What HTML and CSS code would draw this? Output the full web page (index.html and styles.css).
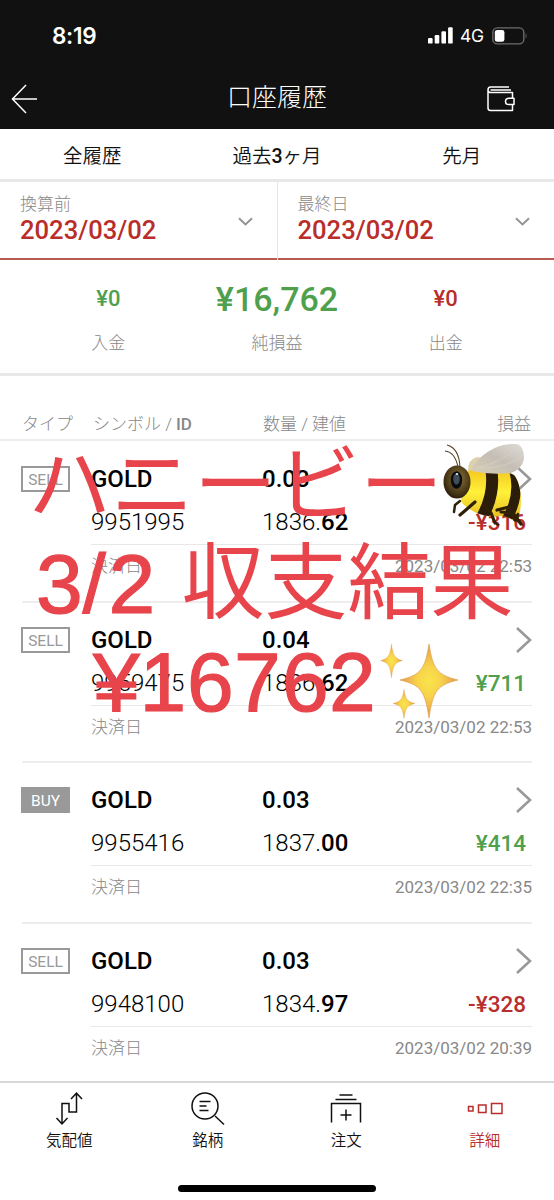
FILE: index.html
```html
<!DOCTYPE html>
<html lang="ja">
<head>
<meta charset="utf-8">
<title>口座履歴</title>
<link rel="stylesheet" href="styles.css">
</head>
<body>
<div class="screen">
  <header class="top">
    <div class="status">
      <span class="clock">8:19</span>
      <span class="signals">
        <svg width="25" height="17" viewBox="0 0 25 17" fill="#fff"><rect x="0" y="11" width="4.6" height="5.6" rx="1.2"/><rect x="6.7" y="8" width="4.6" height="8.6" rx="1.2"/><rect x="13.4" y="4.2" width="4.6" height="12.4" rx="1.2"/><rect x="20.1" y="0.3" width="4.6" height="16.3" rx="1.2"/></svg>
        <span class="net">4G</span>
        <svg width="36" height="18" viewBox="0 0 36 18"><rect x="0.8" y="0.9" width="31" height="16" rx="4.5" fill="none" stroke="#6c6c6c" stroke-width="1.4"/><rect x="2.8" y="3" width="9.6" height="11.8" rx="2.3" fill="#fff"/><path d="M33.6 6.3q2 2.6 0 5.2z" fill="#6c6c6c"/></svg>
      </span>
    </div>
    <div class="titlebar">
      <svg class="back" width="28" height="30" viewBox="0 0 28 30" fill="none" stroke="#fff" stroke-width="1.5"><path d="M15 1 1.5 15 15 29M1.5 15H26"/></svg>
      <h1>口座履歴</h1>
      <svg class="wallet" width="28" height="26" viewBox="0 0 28 26" fill="none" stroke="#fff" stroke-width="1.5" stroke-linejoin="round"><path d="M22 1H3.5Q1 1 1 4V22Q1 24.5 3.5 24.5H25.5V18.500M24 4H3.500M1.200 5Q1.500 6.500 4 6.500H25.500V12.300M22 12.300H27V18.500H22Q18.500 18.500 18.500 15.400T22 12.300Z"/></svg>
    </div>
  </header>

  <nav class="ranges"><span>全履歴</span><span>過去<b>3</b>ヶ月</span><span>先月</span></nav>

  <section class="dates">
    <div class="date"><div><small>換算前</small><strong>2023/03/02</strong></div><svg width="15" height="9" viewBox="0 0 15 9" fill="none" stroke="#929292" stroke-width="1.9"><path d="M1 1.2 7.5 7.4 14 1.2"/></svg></div>
    <div class="date"><div><small>最終日</small><strong>2023/03/02</strong></div><svg width="15" height="9" viewBox="0 0 15 9" fill="none" stroke="#929292" stroke-width="1.9"><path d="M1 1.2 7.5 7.4 14 1.2"/></svg></div>
  </section>

  <section class="summary">
    <div class="green"><strong>¥0</strong><span>入金</span></div>
    <div class="green main"><strong>¥16,762</strong><span>純損益</span></div>
    <div class="red"><strong>¥0</strong><span>出金</span></div>
  </section>

  <div class="columns"><span>タイプ</span><span>シンボル / <b>ID</b></span><span>数量 / 建値</span><span>損益</span></div>

  <main class="trades">
    <article class="trade">
      <div class="badge">SELL</div>
      <div class="info">
        <div class="line"><b>GOLD</b><b>0.03</b><svg class="chev" width="16" height="26" viewBox="0 0 16 26"><path d="M1 1 14 13 1 25"/></svg></div>
        <div class="line"><span>9951995</span><span>1836.<b>62</b></span><strong class="red">-¥316</strong></div>
        <div class="settle"><span>決済日</span><time>2023/03/02 22:53</time></div>
      </div>
    </article>
    <article class="trade">
      <div class="badge">SELL</div>
      <div class="info">
        <div class="line"><b>GOLD</b><b>0.04</b><svg class="chev" width="16" height="26" viewBox="0 0 16 26"><path d="M1 1 14 13 1 25"/></svg></div>
        <div class="line"><span>9959475</span><span>1836.<b>62</b></span><strong class="green">¥711</strong></div>
        <div class="settle"><span>決済日</span><time>2023/03/02 22:53</time></div>
      </div>
    </article>
    <article class="trade">
      <div class="badge buy">BUY</div>
      <div class="info">
        <div class="line"><b>GOLD</b><b>0.03</b><svg class="chev" width="16" height="26" viewBox="0 0 16 26"><path d="M1 1 14 13 1 25"/></svg></div>
        <div class="line"><span>9955416</span><span>1837.<b>00</b></span><strong class="green">¥414</strong></div>
        <div class="settle"><span>決済日</span><time>2023/03/02 22:35</time></div>
      </div>
    </article>
    <article class="trade">
      <div class="badge">SELL</div>
      <div class="info">
        <div class="line"><b>GOLD</b><b>0.03</b><svg class="chev" width="16" height="26" viewBox="0 0 16 26"><path d="M1 1 14 13 1 25"/></svg></div>
        <div class="line"><span>9948100</span><span>1834.<b>97</b></span><strong class="red">-¥328</strong></div>
        <div class="settle"><span>決済日</span><time>2023/03/02 20:39</time></div>
      </div>
    </article>
  </main>

  <footer class="bottom">
    <nav class="tabs">
      <div><svg width="36" height="34" viewBox="0 0 36 34"><path d="M11 31V11.5H18V20H25.500V1.500M20 7 25.500 1.200 31 7M5.500 26 11 32 16.500 26"/></svg><span>気配値</span></div>
      <div><svg width="36" height="34" viewBox="0 0 36 34"><circle cx="15" cy="14" r="13"/><path d="M25 24 34 32.500M9.500 9.500H20.500M9.500 14H16.500M9.500 18.500H18.500"/></svg><span>銘柄</span></div>
      <div><svg width="36" height="34" viewBox="0 0 36 34"><path d="M11.500 3H24.500M7.500 7.500H28.500M3.500 30.500V11.500H32.500V30.500M18 17.500V28.500M12.500 23H23.500"/></svg><span>注文</span></div>
      <div class="active"><svg width="36" height="34" viewBox="0 0 36 34"><path d="M1.500 14.500H6V19H1.500ZM11.500 13H19V20.500H11.500ZM24.500 11.500H35V21.500H24.500Z"/></svg><span>詳細</span></div>
    </nav>
    <div class="home"></div>
  </footer>

  <svg class="overlay" width="554" height="300" viewBox="0 430 554 300">
    <defs>
      <radialGradient id="head" cx=".55" cy=".4" r=".65"><stop offset="0" stop-color="#8b7436"/><stop offset=".65" stop-color="#4c3a19"/><stop offset="1" stop-color="#241807"/></radialGradient>
      <linearGradient id="body" x1="0" y1="0" x2="0" y2="1"><stop offset="0" stop-color="#f4c51e"/><stop offset=".45" stop-color="#fff139"/><stop offset="1" stop-color="#e3b321"/></linearGradient>
      <linearGradient id="wing" x1="0" y1="1" x2="1" y2="0"><stop offset="0" stop-color="#d8cdb4"/><stop offset=".5" stop-color="#c5beb4"/><stop offset="1" stop-color="#dedbd7"/></linearGradient>
      <radialGradient id="spark"><stop offset="0" stop-color="#f9e54a"/><stop offset=".4" stop-color="#f8d34b"/><stop offset="1" stop-color="#e39a50"/></radialGradient>
      <clipPath id="torso"><path d="M467 472C478 463 507 471 514 475C521 483 524 505 517 522C512 520 508 516 501 516C490 518 474 515 462 503C459 491 460 480 467 472Z"/></clipPath>
      <path id="star" d="M0-36C4-11 8-5 29 0C8 5 4 11 0 38C-4 11-8 5-29 0C-8-5-4-11 0-36Z"/>
    </defs>
    <g class="caption">
      <text x="28" y="513.500">ハニービー</text>
      <text class="latin" x="36 82.500 108.500" y="613">3/2</text>
      <text x="181.500" y="612">収支結果</text>
      <text class="latin" x="93 139.500 187 234 282 329" y="711">¥16762</text>
    </g>
    <g class="bee">
      <path d="M468 471Q468 459 477 457Q488 457 491 467Z" fill="#ddd0ad"/>
      <path d="M467 472C478 463 507 471 514 475C521 483 524 505 517 522C512 520 508 516 501 516C490 518 474 515 462 503C459 491 460 480 467 472Z" fill="url(#body)"/>
      <g clip-path="url(#torso)" fill="none" stroke="#2c1d0b"><path d="M491 468C494 484 491 502 481 519" stroke-width="12"/><path d="M514 470C519 487 515 505 507 519" stroke-width="10"/><path d="M520 514L515 523" stroke-width="6"/></g>
      <path d="M471 471C478 455 497 443 516 444Q524 445 524 459Q522 469 511 473Q490 475 471 471Z" fill="url(#wing)"/>
      <path d="M477 468Q500 463 519 447M480 468Q501 469 521 458" fill="none" stroke="#dad7ce" stroke-width=".5"/>
      <path d="M460 467Q459 448 447 445M458 467Q455 452 445 451" fill="none" stroke="#514124" stroke-width="1.1"/>
      <ellipse cx="457" cy="482" rx="13.500" ry="16.500" fill="url(#head)"/>
      <ellipse cx="456.500" cy="480" rx="5.700" ry="8.700" fill="#080b10"/><ellipse cx="456.500" cy="479" rx="3.300" ry="5.500" fill="#434d57"/><ellipse cx="457" cy="474" rx="1.300" ry=".9" fill="#dce5ec"/>
      <g fill="none" stroke="#302008" stroke-linecap="round" stroke-linejoin="round"><path d="M460 501 455 505 454 512" stroke-width="2.500"/><path d="M475 502 467 509 460 515M484 505 491 513 495 523M501 512 513 513 521 524M497 510 509 507 515 520" stroke-width="3.200"/></g>
      <path d="M492 519 500 525 497 526 490 516ZM514 513 524 526 521 525Z" fill="#302008"/>
    </g>
    <g fill="url(#spark)" stroke="#dfa04f" stroke-width=".7"><use href="#star" transform="translate(429 680)"/><use href="#star" transform="translate(391.500 660.500) scale(.38 .46)"/><use href="#star" transform="translate(404 703.500) scale(.38 .4)"/></g>
  </svg>
</div>
</body>
</html>
```
FILE: styles.css
```css
* { box-sizing: border-box; }
body { margin: 0; background: #fff; font-family: Roboto, "Noto Sans CJK JP", sans-serif; color: #111; }
svg { display: block; flex: none; }
b, strong { font-weight: 500; }
.screen { position: relative; width: 554px; height: 1200px; overflow: hidden; display: flex; flex-direction: column; }
.green { color: #4fa04d; }
.red { color: #b92d2b; }

.top { height: 129px; background: #111; color: #fff; flex: none; }
.status { height: 71px; padding: 0 26px 0 52px; display: flex; align-items: center; justify-content: space-between; font-family: Inter, sans-serif; }
.clock { font-size: 22.5px; font-weight: 600; letter-spacing: -.3px; }
.signals { display: flex; align-items: center; gap: 7px; }
.net { width: 24px; margin-right: 1px; font-size: 17.5px; font-weight: 400; letter-spacing: -.3px; }
.titlebar { height: 56px; padding: 0 39px 0 11px; display: flex; align-items: center; justify-content: space-between; }
.titlebar h1 { margin: 0 0 2px 28px; font-size: 25px; line-height: 36px; font-weight: 300; }

.ranges { height: 53px; flex: none; display: grid; grid-template-columns: repeat(3, 1fr); text-align: center; font-size: 19.5px; line-height: 52px; padding-top: 2px; border-bottom: 3px solid #e8e8e8; font-weight: 350; }
.dates { height: 78px; flex: none; display: grid; grid-template-columns: 1fr 1fr; gap: 1px; background: #e5e5e5; }
.date { background: #fff; border-bottom: 2px solid #b85c52; padding: 10px 24px 0 20px; display: flex; justify-content: space-between; align-items: flex-start; }
.date svg { margin-top: 25px; }
.date small { display: block; font-size: 17px; line-height: 24px; font-weight: 300; color: #888; }
.date strong { display: block; font-size: 25.6px; line-height: 28px; color: #b92d2b; }

.summary { height: 116px; flex: none; padding: 19px 24px 0; display: grid; grid-template-columns: repeat(3, 1fr); text-align: center; border-bottom: 3px solid #e8e8e8; }
.summary strong { display: block; font-size: 22px; line-height: 40px; height: 49px; }
.summary .main strong { font-size: 34px; line-height: 41px; }
.summary span { display: block; font-size: 17px; line-height: 30px; font-weight: 300; color: #888; }

.columns { height: 65px; flex: none; padding: 34px 23px 0 22px; display: grid; grid-template-columns: 71px 170px 1fr auto; font-size: 17px; line-height: 28px; font-weight: 300; color: #888; border-bottom: 2px solid #ededed; }

.trades { padding: 1px 22px 0; height: 640px; overflow: hidden; flex: none; }
.trade { height: 160.6px; border-bottom: 2px solid #ededed; display: flex; }
.badge { width: 49px; height: 26px; margin: 24px 21px 0 -1px; border: 2px solid #999; color: #999; font-size: 15.5px; line-height: 24px; text-align: center; flex: none; }
.badge.buy { background: #999; color: #fff; }
.info { flex: 1; padding-top: 23px; }
.line { display: grid; grid-template-columns: 171px 1fr auto; height: 28px; margin-bottom: 15px; font-size: 24px; line-height: 28px; font-weight: 300; align-items: center; color: #000; }
.chev { fill: none; stroke: #999; stroke-width: 2.6; }
.line strong { font-size: 22.5px; margin-right: 6px; }
.line strong.red { color: #b92d2b; }
.line strong.green { color: #4fa04d; }
.settle { margin-top: -7px; border-top: 1.5px solid #e8e8e8; padding-top: 8px; display: flex; justify-content: space-between; font-size: 17px; line-height: 27px; font-weight: 300; color: #888; }
.settle time { font-weight: 400; }

.bottom { position: relative; height: 119px; flex: none; background: #fff; border-top: 2px solid #d8d8d8; display: flex; flex-direction: column; align-items: center; }
.tabs { width: 100%; height: 102px; display: grid; grid-template-columns: repeat(4, 1fr); padding-top: 9px; }
.tabs div { display: flex; flex-direction: column; align-items: center; font-size: 15.5px; line-height: 24px; font-weight: 350; gap: 3px; }
.tabs svg { fill: none; stroke: #111; stroke-width: 1.5; }
.tabs .active { color: #b92d2b; }
.tabs .active svg { stroke: #b92d2b; }
.home { width: 198px; height: 7px; border-radius: 4px; background: #000; flex: none; }

/* Caption and stickers floating over the trade list */
.overlay { position: absolute; left: 0; top: 430px; }
.caption { fill: #e8444b; font: 400 83px "Noto Sans CJK JP", sans-serif; }
.caption .latin { font-family: "Liberation Sans", Arial, sans-serif; font-size: 84px; stroke: #e8444b; stroke-width: 1.2; }
```
